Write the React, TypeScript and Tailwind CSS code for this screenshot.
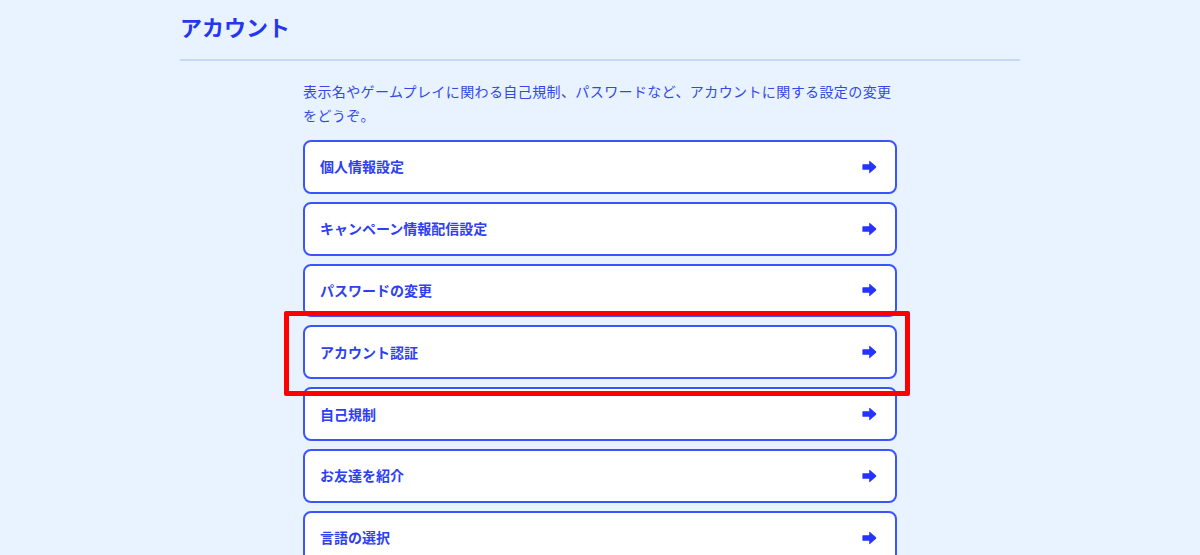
const items = [
  "個人情報設定",
  "キャンペーン情報配信設定",
  "パスワードの変更",
  "アカウント認証",
  "自己規制",
  "お友達を紹介",
  "言語の選択",
];

function ArrowIcon() {
  return (
    <svg width="15" height="14" viewBox="0 0 15 14" className="shrink-0">
      <path
        d="M1 4.2 H7.2 V1.2 Q7.2 0.4 7.9 0.9 L14 6.3 Q14.6 7 14 7.7 L7.9 13.1 Q7.2 13.6 7.2 12.8 V9.8 H1 Q0.4 9.8 0.4 9.2 V4.8 Q0.4 4.2 1 4.2 Z"
        fill="#2433ff"
      />
    </svg>
  );
}

export default function App() {
  return (
    <div
      className="min-h-[555px] w-full overflow-hidden bg-[#e8f3ff]"
      style={{ fontFamily: '"Noto Sans CJK JP", "Noto Sans", sans-serif' }}
    >
      <div className="mx-auto w-[840px]">
        <h1 className="pt-[10px] pb-[17px] text-[22px] font-bold leading-[32px] text-[#2436f0]">
          アカウント
        </h1>
        <div className="h-[2px] bg-[#c3d9f5]" />

        <div className="mx-auto w-[594px] pt-[18px]">
          <p className="text-[14px] leading-[24px] tracking-[0.4px] text-[#3348e8]">
            表示名やゲームプレイに関わる自己規制、パスワードなど、アカウントに関する設定の変更をどうぞ。
          </p>

          <div className="relative mt-[13px] flex flex-col gap-[8px]">
            {items.map((label) => (
              <div
                key={label}
                className="flex h-[53.8px] items-center justify-between rounded-[8px] border-2 border-[#3a55ff] bg-white pl-[15px] pr-[18px]"
              >
                <span className="text-[14px] font-bold text-[#2d3ff0]">{label}</span>
                <ArrowIcon />
              </div>
            ))}
            <div className="pointer-events-none absolute left-[-19px] top-[171px] h-[85px] w-[626px] rounded-[2px] border-[5.5px] border-[#ff0000]" />
          </div>
        </div>
      </div>
    </div>
  );
}
